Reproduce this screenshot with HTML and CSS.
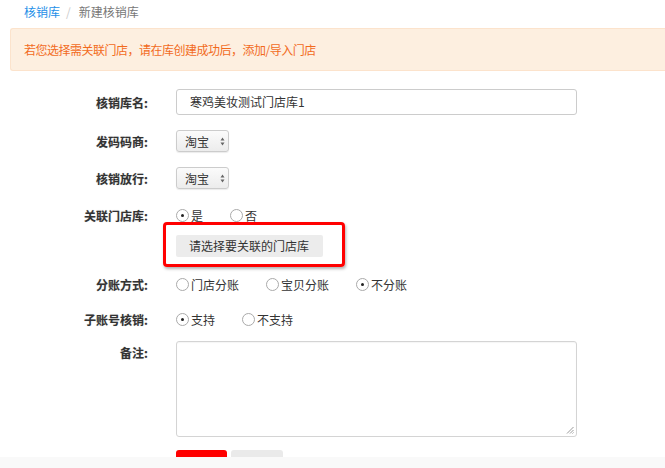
FILE: index.html
```html
<!DOCTYPE html>
<html lang="zh">
<head>
<meta charset="utf-8">
<link rel="stylesheet" href="styles.css">
</head>
<body>
<div class="crumb"><a class="crumb-link">核销库</a><span class="crumb-sep">/</span><span class="crumb-cur">新建核销库</span></div>
<div class="alert">若您选择需关联门店，请在库创建成功后，添加/导入门店</div>
<div class="form">
  <div class="row r-name">
    <div class="label">核销库名:</div>
    <div class="ctrl"><div class="input">寒鸡美妆测试门店库1</div></div>
  </div>
  <div class="row r-sel">
    <div class="label">发码码商:</div>
    <div class="ctrl"><div class="select">淘宝<svg class="arr" width="5" height="9" viewBox="0 0 5 9"><path d="M2.5 0.5 L4.5 3.5 L0.5 3.5 Z M2.5 8.5 L4.5 5.5 L0.5 5.5 Z" fill="#666"/></svg></div></div>
  </div>
  <div class="row r-sel2">
    <div class="label">核销放行:</div>
    <div class="ctrl"><div class="select">淘宝<svg class="arr" width="5" height="9" viewBox="0 0 5 9"><path d="M2.5 0.5 L4.5 3.5 L0.5 3.5 Z M2.5 8.5 L4.5 5.5 L0.5 5.5 Z" fill="#666"/></svg></div></div>
  </div>
  <div class="row r-radio r-link">
    <div class="label">关联门店库:</div>
    <div class="ctrl radios">
      <span class="opt"><span class="radio on"></span>是</span>
      <span class="opt"><span class="radio"></span>否</span>
    </div>
  </div>
  <div class="row r-btn">
    <div class="label"></div>
    <div class="ctrl">
      <div class="pick-wrap"><span class="pick">请选择要关联的门店库</span><span class="mark"></span></div>
    </div>
  </div>
  <div class="row r-radio r-split">
    <div class="label">分账方式:</div>
    <div class="ctrl radios">
      <span class="opt"><span class="radio"></span>门店分账</span>
      <span class="opt"><span class="radio"></span>宝贝分账</span>
      <span class="opt"><span class="radio on"></span>不分账</span>
    </div>
  </div>
  <div class="row r-radio r-sub">
    <div class="label">子账号核销:</div>
    <div class="ctrl radios">
      <span class="opt"><span class="radio on"></span>支持</span>
      <span class="opt"><span class="radio"></span>不支持</span>
    </div>
  </div>
  <div class="row r-note">
    <div class="label label-top">备注:</div>
    <div class="ctrl"><div class="textarea"><svg class="grip" width="8" height="8" viewBox="0 0 8 8"><path d="M7.5 1 L1 7.5 M7.5 4 L4 7.5 M7.5 6.5 L6.5 7.5" stroke="#999" stroke-width="1"/></svg></div></div>
  </div>
</div>
<div class="footer">
  <div class="actions"><span class="btn btn-red"></span><span class="btn btn-gray"></span></div>
  <div class="band"></div>
</div>
</body>
</html>
```
FILE: styles.css
```css
html, body {
  margin: 0;
  padding: 0;
  background: #fff;
  overflow: hidden;
}
body {
  font-family: "Noto Sans CJK SC", "Liberation Sans", sans-serif;
  font-size: 12px;
  color: #333;
  width: 665px;
  height: 468px;
}
.crumb {
  height: 24px;
  line-height: 24px;
  padding-left: 24px;
  font-size: 12px;
}
.crumb-link { color: #1e8fe8; }
.crumb-sep { color: #ccc; margin: 0 8px 0 6px; }
.crumb-cur { color: #777; }
.alert {
  margin: 4px 0 0 10px;
  height: 41px;
  line-height: 41px;
  padding-left: 13px;
  background: #fdefe0;
  border: 1px solid #fce3cc;
  border-right: none;
  border-radius: 3px 0 0 3px;
  color: #f26b1d;
  font-size: 12px;
  letter-spacing: -0.5px;
}
.form { margin-top: 18px; }
.row { display: flex; align-items: center; }
.label {
  width: 148px;
  flex: none;
  text-align: right;
  font-weight: bold;
  color: #333;
  text-shadow: 0 0 1px rgba(0,0,0,0.25);
}
.ctrl { margin-left: 28px; flex: 1; }
.r-name { height: 26px; }
.r-sel { height: 22px; margin-top: 15px; }
.r-sel2 { height: 22px; margin-top: 15px; }
.r-link { height: 20px; margin-top: 16px; }
.r-btn { height: 22px; margin-top: 10px; }
.r-split { height: 20px; margin-top: 17px; }
.r-sub { height: 20px; margin-top: 15px; }
.r-note { margin-top: 12px; align-items: flex-start; }
.label-top { padding-top: 3px; }
.input {
  width: 386px;
  height: 24px;
  line-height: 24px;
  border: 1px solid #ccc;
  border-radius: 3px;
  padding-left: 13px;
  color: #333;
}
.select {
  display: inline-flex;
  align-items: center;
  width: 51px;
  height: 20px;
  border: 1px solid #ccc;
  border-radius: 3px;
  background: linear-gradient(#fbfbfb, #ececec);
  box-shadow: 0 1px 1px rgba(0,0,0,0.08);
  color: #333;
  text-indent: 8px;
}
.arr { margin-left: 11px; }
.radios { display: flex; align-items: center; }
.opt { display: inline-flex; align-items: center; margin-right: 27px; color: #333; }
.radio {
  width: 11px;
  height: 11px;
  border: 1px solid #aaa;
  border-radius: 50%;
  margin-right: 2px;
  position: relative;
  background: #fff;
}
.radio.on::after {
  content: "";
  position: absolute;
  left: 4px;
  top: 4px;
  width: 3px;
  height: 3px;
  border-radius: 50%;
  background: #222;
}
.pick-wrap { position: relative; display: inline-block; }
.pick {
  display: inline-block;
  height: 22px;
  line-height: 22px;
  padding: 0 14px 0 13px;
  background: #ececec;
  border-radius: 2px;
  color: #333;
}
.mark {
  position: absolute;
  left: -13px;
  top: -13px;
  width: 176px;
  height: 39px;
  border: 3px solid #f00;
  border-radius: 4px;
  box-shadow: 1px 2px 3px rgba(0,0,0,0.3);
}
.textarea {
  position: relative;
  width: 399px;
  height: 94px;
  border: 1px solid #d4d4d4;
  border-radius: 3px;
  box-shadow: inset 0 1px 1px rgba(0,0,0,0.04);
}
.grip { position: absolute; right: 2px; bottom: 2px; }
.footer { margin-top: 13px; }
.actions { padding-left: 176px; display: flex; gap: 4px; }
.btn { display: block; height: 7px; border-radius: 3px 3px 0 0; }
.btn-red { width: 51px; background: #f00; }
.btn-gray { width: 52px; background: #eaeaea; }
.band { height: 20px; background: #f9f9f9; }
```
